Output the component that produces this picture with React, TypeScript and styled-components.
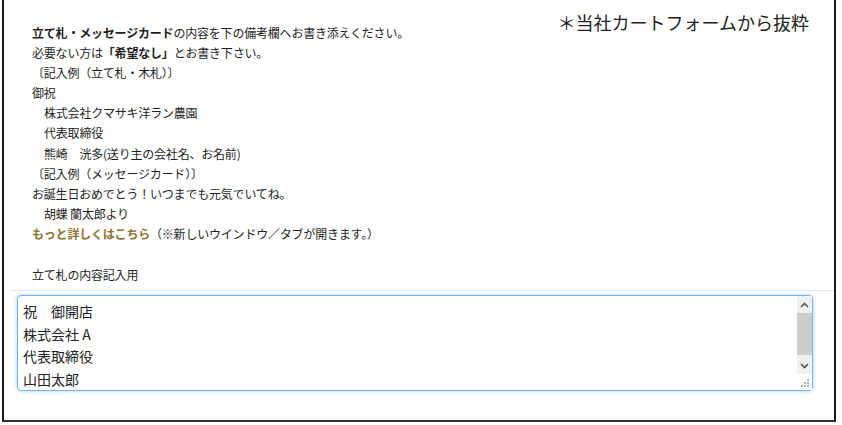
import styled, { createGlobalStyle } from 'styled-components';

const GlobalStyle = createGlobalStyle`
  html, body {
    margin: 0;
    padding: 0;
    background: #ffffff;
  }
  body {
    font-family: 'Noto Sans CJK JP', 'Noto Sans', sans-serif;
    color: #1e1e1e;
  }
`;

const Colors = {
  text: '#1e1e1e',
  gold: '#8c7430',
  frame: '#1a1a1a',
  divider: '#dfe4ea',
  focus: '#74b4ee',
  barBg: '#f0f0f0',
  thumb: '#cdcdcd',
  arrow: '#555555',
};

const Frame = styled.div`
  position: relative;
  box-sizing: border-box;
  width: 834px;
  height: 422px;
  margin-left: 2px;
  border: 2px solid ${Colors.frame};
  border-top: none;
  border-bottom-color: #333;
`;

const Caption = styled.div`
  position: absolute;
  top: 9px;
  right: 25px;
  font-size: 18px;
  line-height: 26px;
  color: #222;
  white-space: nowrap;
`;

const Notes = styled.div`
  padding: 23px 0 0 28px;
  font-size: 12px;
  line-height: 20.1px;
  letter-spacing: -0.2px;
  color: ${Colors.text};
`;

const Line = styled.div<{ $indent?: boolean }>`
  padding-left: ${(p) => (p.$indent ? '12px' : '0')};
  white-space: nowrap;
`;

const Strong = styled.b`
  font-weight: 700;
`;

const MoreLink = styled.a`
  color: ${Colors.gold};
  font-weight: 700;
  text-decoration: none;
  cursor: pointer;
`;

const FieldLabel = styled.div`
  margin-top: 21px;
  padding-left: 28px;
  font-size: 12px;
  line-height: 20px;
  letter-spacing: -0.2px;
  color: ${Colors.text};
`;

const Divider = styled.div`
  margin: 5px 0 0 6px;
  height: 1px;
  background: ${Colors.divider};
`;

const grip =
  "url(\"data:image/svg+xml;utf8,<svg xmlns='http://www.w3.org/2000/svg' width='15' height='15' viewBox='0 0 15 15'><g fill='%23b0b0b0'><rect x='10' y='4' width='2' height='2'/><rect x='7' y='7' width='2' height='2'/><rect x='10' y='7' width='2' height='2'/><rect x='4' y='10' width='2' height='2'/><rect x='7' y='10' width='2' height='2'/><rect x='10' y='10' width='2' height='2'/></g></svg>\")";

const Field = styled.div`
  position: relative;
  width: 796px;
  margin: 4px 0 0 13px;
`;

const Memo = styled.textarea`
  display: block;
  box-sizing: border-box;
  width: 796px;
  height: 96px;
  margin: 0;
  padding: 4px 20px 3px 5px;
  border: 1px solid ${Colors.focus};
  border-radius: 4px;
  box-shadow: 0 0 4px rgba(110, 175, 240, 0.55);
  outline: none;
  font-family: 'Noto Sans CJK JP', 'Noto Sans', sans-serif;
  font-size: 14px;
  line-height: 22.7px;
  color: #222;
  background: #fff;
  overflow: hidden;
  resize: both;

  &::-webkit-resizer {
    background: #fff ${grip} no-repeat center;
  }
`;

/* the textarea's scrollbar, drawn over its right edge */
const ScrollBar = styled.div`
  position: absolute;
  top: 1px;
  right: 1px;
  width: 15px;
  height: 78px;
  display: flex;
  flex-direction: column;
  background: ${Colors.barBg};
  pointer-events: none;
`;

const ArrowButton = styled.div`
  height: 17px;
  display: flex;
  align-items: center;
  justify-content: center;
  flex-shrink: 0;
`;

const Track = styled.div`
  flex: 1;
`;

const Thumb = styled.div`
  height: 42px;
  background: ${Colors.thumb};
`;

function Chevron({ up }: { up?: boolean }) {
  return (
    <svg width="9" height="6" viewBox="0 0 9 6">
      <path
        d={up ? 'M1 5 L4.5 1.5 L8 5' : 'M1 1 L4.5 4.5 L8 1'}
        fill="none"
        stroke={Colors.arrow}
        strokeWidth="1.7"
      />
    </svg>
  );
}

const memoText = '祝　御開店\n株式会社 A\n代表取締役\n山田太郎';

function App() {
  return (
    <>
      <GlobalStyle />
      <Frame>
        <Caption>＊当社カートフォームから抜粋</Caption>
        <Notes>
          <Line>
            <Strong>立て札・メッセージカード</Strong>の内容を下の備考欄へお書き添えください。
          </Line>
          <Line>
            必要ない方は<Strong>「希望なし」</Strong>とお書き下さい。
          </Line>
          <Line>〔記入例（立て札・木札）〕</Line>
          <Line>御祝</Line>
          <Line $indent>株式会社クマサキ洋ラン農園</Line>
          <Line $indent>代表取締役</Line>
          <Line $indent>熊崎　洸多(送り主の会社名、お名前)</Line>
          <Line>〔記入例（メッセージカード）〕</Line>
          <Line>お誕生日おめでとう！いつまでも元気でいてね。</Line>
          <Line $indent>胡蝶 蘭太郎より</Line>
          <Line>
            <MoreLink>もっと詳しくはこちら</MoreLink>（※新しいウインドウ／タブが開きます。）
          </Line>
        </Notes>
        <FieldLabel>立て札の内容記入用</FieldLabel>
        <Divider />
        <Field>
          <Memo readOnly defaultValue={memoText} />
          <ScrollBar>
            <ArrowButton>
              <Chevron up />
            </ArrowButton>
            <Track>
              <Thumb />
            </Track>
            <ArrowButton>
              <Chevron />
            </ArrowButton>
          </ScrollBar>
        </Field>
      </Frame>
    </>
  );
}

export default App;
